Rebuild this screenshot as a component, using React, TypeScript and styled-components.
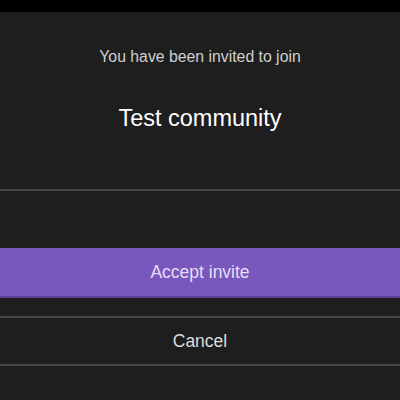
import styled, { createGlobalStyle } from "styled-components";

const GlobalStyle = createGlobalStyle`
  html, body {
    margin: 0;
    padding: 0;
    background: #1e1e1e;
    font-family: "Liberation Sans", Arial, sans-serif;
  }
`;

const App = () => {
  return (
    <Screen>
      <GlobalStyle />
      <StatusBar />
      <Intro>
        <Subtitle>You have been invited to join</Subtitle>
        <CommunityName>Test community</CommunityName>
      </Intro>
      <Divider />
      <Spacer />
      <AcceptButton>Accept invite</AcceptButton>
      <Divider $top={18} />
      <CancelButton>Cancel</CancelButton>
      <Divider />
    </Screen>
  );
};

const Screen = styled.div`
  width: 400px;
  height: 400px;
  display: flex;
  flex-direction: column;
  background: #1e1e1e;
  overflow: hidden;
`;

const StatusBar = styled.div`
  height: 12px;
  background: #000;
  flex-shrink: 0;
`;

const Intro = styled.div`
  display: flex;
  flex-direction: column;
  align-items: center;
  padding: 36px 0 58px;
`;

const Subtitle = styled.div`
  font-size: 15.8px;
  line-height: 18px;
  color: #cfcfcf;
`;

const CommunityName = styled.div`
  margin-top: 39px;
  font-size: 23.5px;
  line-height: 26px;
  color: #fff;
`;

const Divider = styled.div<{ $top?: number }>`
  height: 2px;
  margin-top: ${({ $top }) => $top ?? 0}px;
  background: #454545;
  flex-shrink: 0;
`;

const Spacer = styled.div`
  height: 57px;
  flex-shrink: 0;
`;

const AcceptButton = styled.button`
  height: 50px;
  border: none;
  border-bottom: 2px solid #5e4296;
  background: #7858bd;
  color: #e6def5;
  font-family: inherit;
  font-size: 17.5px;
  padding: 0;
  flex-shrink: 0;
`;

const CancelButton = styled.button`
  height: 46px;
  border: none;
  background: transparent;
  color: #dcdcdc;
  font-family: inherit;
  font-size: 17.5px;
  padding: 0;
  flex-shrink: 0;
`;

export default App;
